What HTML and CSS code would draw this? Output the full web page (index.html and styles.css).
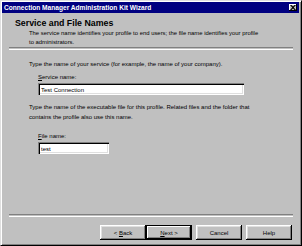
FILE: index.html
```html
<!DOCTYPE html>
<html>
<head>
    <title>Connection Manager Administration Kit Wizard</title>
    <link rel="stylesheet" href="styles.css">
</head>
<body>
    <div class="window">
        <div class="titlebar">
            <span class="title">Connection Manager Administration Kit Wizard</span>
            <span class="close-btn">
                <svg width="6" height="5" viewBox="0 0 6 5">
                    <path d="M0 0h1.5L3 1.5 4.5 0H6L3.8 2.5 6 5H4.5L3 3.5 1.5 5H0l2.2-2.5z" fill="#000"/>
                </svg>
            </span>
        </div>
        <div class="header">
            <h1>Service and File Names</h1>
            <p class="subtitle">The service name identifies your profile to end users; the file name identifies your profile to administrators.</p>
        </div>
        <div class="separator"></div>
        <div class="content">
            <p class="intro">Type the name of your service (for example, the name of your company).</p>
            <div class="field">
                <label for="serviceName"><u>S</u>ervice name:</label>
                <input type="text" id="serviceName" class="wide" value="Test Connection">
            </div>
            <p class="intro">Type the name of the executable file for this profile. Related files and the folder that contains the profile also use this name.</p>
            <div class="field spaced">
                <label for="fileName"><u>F</u>ile name:</label>
                <input type="text" id="fileName" class="narrow" value="test">
            </div>
        </div>
        <div class="separator"></div>
        <div class="buttons">
            <button type="button">&lt; <u>B</u>ack</button>
            <button type="button" class="default"><u>N</u>ext &gt;</button>
            <button type="button" class="gap">Cancel</button>
            <button type="button" class="gap">Help</button>
        </div>
    </div>
</body>
</html>
```

FILE: styles.css
```css
body {
    margin: 0;
    font-family: "Liberation Sans", Arial, sans-serif;
    font-size: 6px;
    color: #000;
}
.window {
    width: 302px;
    height: 246px;
    box-sizing: border-box;
    background-color: #c0c0c0;
    border-top: 1px solid #dfdfdf;
    border-left: 1px solid #dfdfdf;
    border-right: 1px solid #000;
    border-bottom: 1px solid #000;
    box-shadow: inset 1px 1px 0 #fff, inset -1px -1px 0 #808080;
    padding: 1px 2px 2px 1px;
    display: flex;
    flex-direction: column;
}
.titlebar {
    height: 11px;
    background-color: #000080;
    color: #fff;
    display: flex;
    align-items: center;
    justify-content: space-between;
    padding: 0 2px 0 2px;
}
.title {
    font-weight: bold;
    font-size: 6.6px;
}
.close-btn {
    width: 8px;
    height: 7px;
    background-color: #c0c0c0;
    box-shadow: inset -1px -1px 0 #000, inset 1px 1px 0 #fff;
    display: flex;
    align-items: center;
    justify-content: center;
}
.header {
    padding: 5px 0 0 13px;
    height: 29px;
}
h1 {
    margin: 0;
    font-size: 8.8px;
    font-weight: bold;
    line-height: 11px;
}
.subtitle {
    margin: 0 0 0 14px;
    line-height: 9px;
    width: 232px;
    font-size: 5.9px;
}
.separator {
    margin: 0 6px 0 7px;
    height: 1px;
    border-top: 1px solid #808080;
    border-bottom: 1px solid #fff;
}
.content {
    flex: 1;
    padding: 9px 0 0 27px;
}
.intro {
    margin: 0;
    line-height: 10px;
    width: 235px;
}
.field {
    padding: 4px 0 0 9px;
    margin-bottom: 7px;
}
.field.spaced {
    padding-top: 10px;
}
label {
    display: block;
    line-height: 8px;
}
input {
    display: block;
    margin: 2px 0 0 0;
    height: 12px;
    box-sizing: border-box;
    border: none;
    background-color: #fff;
    box-shadow: inset 1px 1px 0 #808080, inset 2px 2px 0 #000, inset -1px -1px 0 #fff, inset -2px -2px 0 #dfdfdf;
    padding: 1px 3px 0 3px;
    font-family: "Liberation Sans", Arial, sans-serif;
    font-size: 6px;
}
input.wide {
    width: 206px;
}
input.narrow {
    width: 71px;
}
.buttons {
    display: flex;
    justify-content: flex-end;
    padding: 8px 7px 3px 0;
}
button {
    width: 46px;
    height: 15px;
    background-color: #c0c0c0;
    border: none;
    box-shadow: inset -1px -1px 0 #000, inset 1px 1px 0 #fff, inset -2px -2px 0 #808080, inset 2px 2px 0 #dfdfdf;
    font-family: "Liberation Sans", Arial, sans-serif;
    font-size: 6px;
    padding: 0;
    color: #000;
}
button.default {
    box-shadow: inset 0 0 0 1px #000, inset -2px -2px 0 #000, inset 2px 2px 0 #fff, inset -3px -3px 0 #808080;
}
button.gap {
    margin-left: 4px;
}
```
